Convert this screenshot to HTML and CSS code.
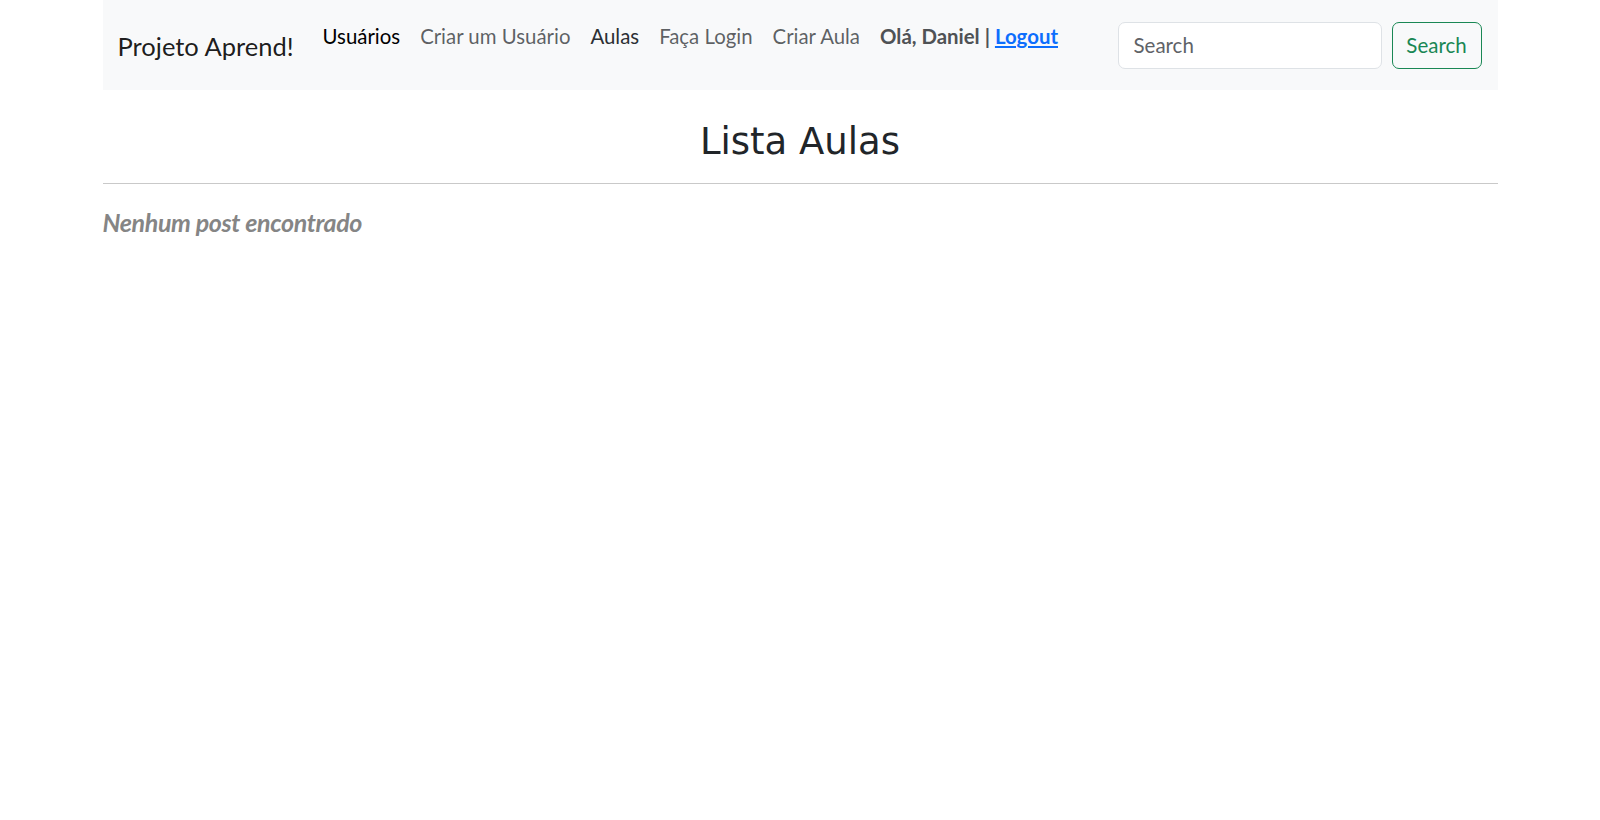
FILE: index.html
```html
<!DOCTYPE html>
<html lang="pt-BR">
<head>
<meta charset="utf-8">
<title>Lista Aulas</title>
<link rel="stylesheet" href="styles.css">
</head>
<body>
<div class="container">
  <nav class="navbar">
    <a class="brand" href="#">Projeto Aprend!</a>
    <ul class="nav">
      <li><a class="nav-link active" href="#">Usuários</a></li>
      <li><a class="nav-link" href="#">Criar um Usuário</a></li>
      <li><a class="nav-link dark" href="#">Aulas</a></li>
      <li><a class="nav-link" href="#">Faça Login</a></li>
      <li><a class="nav-link" href="#">Criar Aula</a></li>
      <li><span class="nav-link greet">Olá, Daniel | <a class="logout" href="#">Logout</a></span></li>
    </ul>
    <form class="search">
      <input class="search-input" type="search" placeholder="Search">
      <button class="search-btn" type="button">Search</button>
    </form>
  </nav>
  <h2 class="title">Lista Aulas</h2>
  <hr class="divider">
  <p class="empty">Nenhum post encontrado</p>
</div>
</body>
</html>
```

FILE: styles.css
```css
* { box-sizing: border-box; }
html, body { margin: 0; padding: 0; background: #fff; }
body {
  font-family: Lato, "Open Sans", sans-serif;
  font-size: 20px;
  line-height: 1.5;
  color: #212529;
}
.container {
  width: 1395px;
  margin: 0 auto;
}
.navbar {
  display: flex;
  align-items: center;
  height: 90px;
  background: #f8f9fa;
  padding: 0 16px 0 15px;
}
.brand {
  font-size: 25.5px;
  line-height: 37.5px;
  color: rgba(0, 0, 0, 0.9);
  text-decoration: none;
  margin-right: 19px;
  margin-top: 4px;
}
.nav {
  list-style: none;
  margin: 0;
  padding: 0;
  display: flex;
  align-self: flex-start;
  margin-top: 11px;
}
.nav-link {
  display: block;
  padding: 10px;
  font-size: 20.4px;
  line-height: 30px;
  color: rgba(33, 37, 41, 0.72);
  text-decoration: none;
}
.nav-link.active { color: #000; }
.nav-link.dark { color: #2b2f33; }
.greet { font-weight: 700; color: #4f5255; }
.logout { color: #0d6efd; text-decoration: underline; }
.search {
  margin-left: auto;
  display: flex;
  gap: 10px;
}
.search-input {
  width: 264px;
  height: 47px;
  border: 1px solid #dee2e6;
  border-radius: 7px;
  background: #fff;
  padding: 0 15px;
  font-family: inherit;
  font-size: 20.5px;
  color: #212529;
  outline: none;
}
.search-input::placeholder { color: #5f6367; }
.search-btn {
  width: 90px;
  height: 47px;
  border: 1px solid #198754;
  border-radius: 7px;
  background: transparent;
  color: #198754;
  font-family: inherit;
  font-size: 20.5px;
  padding: 0;
}
.title {
  margin: 29px 0 0;
  text-align: center;
  font-family: "DejaVu Sans", sans-serif;
  font-weight: 400;
  font-size: 37px;
  line-height: 46px;
  color: #212529;
}
.divider {
  margin: 18px 0 0;
  border: 0;
  border-top: 1px solid #c9c9c9;
  height: 0;
}
.empty {
  margin: 23px 0 0;
  font-size: 25px;
  line-height: 31px;
  font-weight: 700;
  font-style: italic;
  color: #858585;
  letter-spacing: -0.35px;
}
```
